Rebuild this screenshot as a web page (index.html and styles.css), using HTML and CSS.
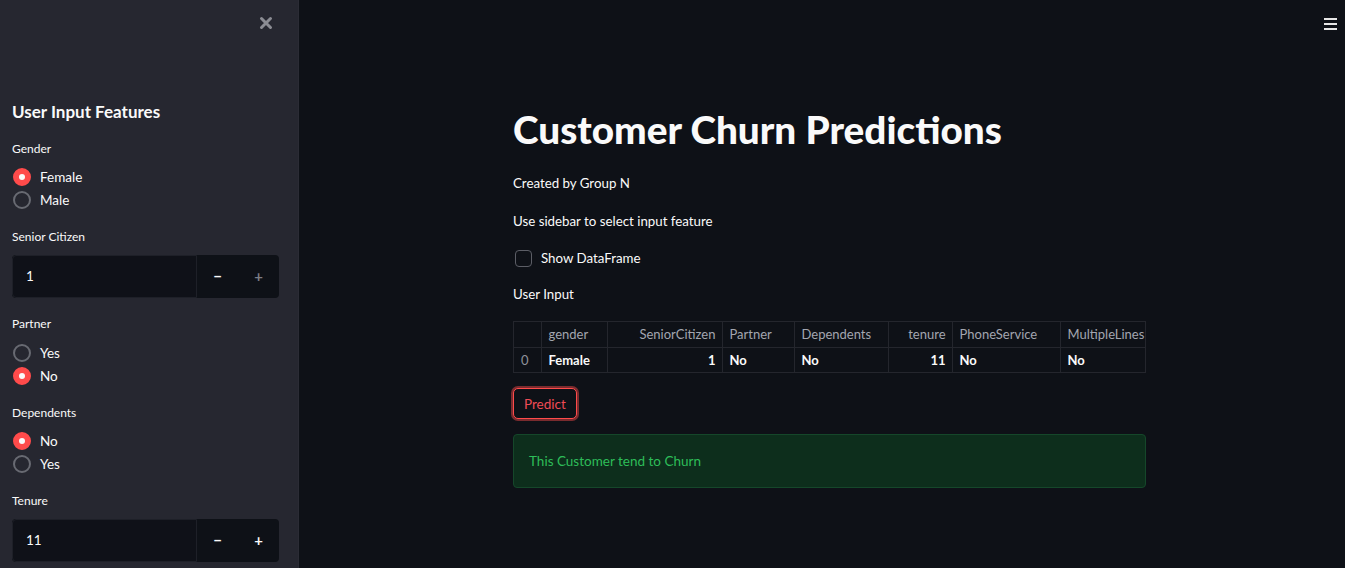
FILE: index.html
```html
<!DOCTYPE html>
<html lang="en">
<head>
<meta charset="utf-8">
<title>Customer Churn Predictions</title>
<link rel="stylesheet" href="styles.css">
</head>
<body>
<div class="app">
  <aside class="sidebar">
    <div class="sidebar-top">
      <button class="close-btn" aria-label="Close sidebar">
        <svg width="14" height="14" viewBox="0 0 14 14"><path d="M2.5 2.5 L11.5 11.5 M11.5 2.5 L2.5 11.5" stroke="#8b8c93" stroke-width="3" stroke-linecap="round"/></svg>
      </button>
    </div>
    <h2 class="side-title">User Input Features</h2>

    <div class="widget first">
      <div class="wlabel">Gender</div>
      <div class="radio-group">
        <div class="radio checked"><span class="dot"></span><span>Female</span></div>
        <div class="radio"><span class="dot"></span><span>Male</span></div>
      </div>
    </div>

    <div class="widget">
      <div class="wlabel">Senior Citizen</div>
      <div class="number-input">
        <div class="num-field">1</div>
        <div class="num-btns">
          <span class="step">&minus;</span>
          <span class="step disabled">+</span>
        </div>
      </div>
    </div>

    <div class="widget after-input">
      <div class="wlabel">Partner</div>
      <div class="radio-group">
        <div class="radio"><span class="dot"></span><span>Yes</span></div>
        <div class="radio checked"><span class="dot"></span><span>No</span></div>
      </div>
    </div>

    <div class="widget">
      <div class="wlabel">Dependents</div>
      <div class="radio-group">
        <div class="radio checked"><span class="dot"></span><span>No</span></div>
        <div class="radio"><span class="dot"></span><span>Yes</span></div>
      </div>
    </div>

    <div class="widget">
      <div class="wlabel">Tenure</div>
      <div class="number-input tight">
        <div class="num-field">11</div>
        <div class="num-btns">
          <span class="step">&minus;</span>
          <span class="step">+</span>
        </div>
      </div>
    </div>
  </aside>

  <main class="main">
    <div class="menu">
      <span></span><span></span><span></span>
    </div>
    <div class="block">
      <h1 class="title">Customer Churn Predictions</h1>
      <p class="text t1">Created by Group N</p>
      <p class="text t2">Use sidebar to select input feature</p>
      <label class="checkbox"><span class="box"></span><span>Show DataFrame</span></label>
      <p class="text t3">User Input</p>
      <div class="table-wrap">
        <table class="df">
          <colgroup>
            <col class="c-idx">
            <col class="c-gender">
            <col class="c-senior">
            <col class="c-partner">
            <col class="c-dep">
            <col class="c-ten">
            <col class="c-phone">
            <col class="c-multi">
          </colgroup>
          <thead>
            <tr>
              <th></th>
              <th>gender</th>
              <th class="num">SeniorCitizen</th>
              <th>Partner</th>
              <th>Dependents</th>
              <th class="num">tenure</th>
              <th>PhoneService</th>
              <th>MultipleLines</th>
            </tr>
          </thead>
          <tbody>
            <tr>
              <td class="idx">0</td>
              <td>Female</td>
              <td class="num">1</td>
              <td>No</td>
              <td>No</td>
              <td class="num">11</td>
              <td>No</td>
              <td>No</td>
            </tr>
          </tbody>
        </table>
      </div>
      <button class="predict">Predict</button>
      <div class="success">This Customer tend to Churn</div>
    </div>
  </main>
</div>
</body>
</html>
```
FILE: styles.css
```css
* { box-sizing: border-box; }
html, body { margin: 0; padding: 0; }
body {
  background: #0e1117;
  color: #fafafa;
  font-family: "Lato", "Noto Sans", sans-serif;
  width: 1345px;
  height: 568px;
  overflow: hidden;
}
.app {
  display: flex;
  height: 568px;
}
.sidebar {
  width: 299px;
  flex: none;
  background: #262730;
  padding: 0 19px 0 12px;
  border-right: 1px solid #2b2c35;
}
.sidebar-top {
  height: 100px;
  display: flex;
  justify-content: flex-end;
  align-items: flex-start;
  padding-top: 16px;
}
.close-btn {
  background: none;
  border: none;
  padding: 0;
  width: 14px;
  height: 14px;
  margin-right: 6px;
  display: flex;
}
.side-title {
  margin: 0;
  font-size: 17px;
  font-weight: 700;
  line-height: 24px;
  height: 24px;
}
.widget { margin-top: 15.5px; }
.widget.first { margin-top: 14.5px; }
.widget.after-input { margin-top: 16.5px; }
.wlabel {
  font-size: 12px;
  line-height: 20px;
  height: 20px;
}
.radio-group {
  margin-top: 7px;
  display: flex;
  flex-direction: column;
}
.widget.first .radio-group { margin-top: 6.5px; }
.radio {
  display: flex;
  align-items: center;
  height: 23px;
  font-size: 13.5px;
  gap: 9px;
}
.dot {
  width: 18px;
  height: 18px;
  border-radius: 50%;
  border: 2px solid #686a72;
  margin-left: 1px;
  display: flex;
  align-items: center;
  justify-content: center;
}
.radio.checked .dot {
  background: #ff4b4b;
  border-color: #ff4b4b;
}
.radio.checked .dot::after {
  content: "";
  width: 6px;
  height: 6px;
  border-radius: 50%;
  background: #fafafa;
}
.number-input {
  margin-top: 8px;
  height: 43px;
  display: flex;
  background: #0e1117;
  border-radius: 4px;
  overflow: hidden;
}
.number-input.tight { margin-top: 7.5px; }
.num-field {
  width: 186px;
  border: 1px solid #1e2028;
  border-radius: 4px 0 0 4px;
  background: #0f1118;
  font-size: 13.5px;
  display: flex;
  align-items: center;
  padding-left: 13px;
}
.num-btns {
  flex: 1;
  display: flex;
  align-items: center;
}
.step {
  width: 41px;
  text-align: center;
  font-size: 15px;
  font-weight: 700;
  color: #fafafa;
}
.step.disabled { color: #7c7e86; }

.main {
  flex: 1;
  position: relative;
  padding-left: 214px;
}
.menu {
  position: absolute;
  right: 8px;
  top: 18px;
  width: 13px;
  display: flex;
  flex-direction: column;
  gap: 3px;
}
.menu span {
  height: 2px;
  background: #e6e6e6;
}
.block {
  width: 633px;
  padding-top: 106px;
  display: flex;
  flex-direction: column;
  align-items: flex-start;
}
.title {
  margin: 0;
  font-size: 38.7px;
  font-weight: 900;
  line-height: 46px;
  height: 46px;
}
.text {
  margin: 0;
  font-size: 13.3px;
  line-height: 21px;
  height: 21px;
}
.t1 { margin-top: 20.5px; }
.t2 { margin-top: 17px; }
.checkbox {
  margin-top: 16px;
  display: flex;
  align-items: center;
  gap: 9px;
  height: 21px;
  font-size: 13.3px;
}
.box {
  width: 17px;
  height: 17px;
  border: 1px solid #5c5e66;
  border-radius: 4px;
  margin-left: 2px;
}
.t3 { margin-top: 15px; }
.table-wrap {
  margin-top: 16.5px;
  width: 633px;
  overflow: hidden;
  border: 1px solid #24262d;
}
.df {
  border-collapse: collapse;
  table-layout: fixed;
  width: 646px;
  font-size: 13px;
  white-space: nowrap;
}
.df th, .df td {
  height: 25px;
  padding: 0 6px 0 7px;
  border-right: 1px solid #24262d;
  text-align: left;
  overflow: hidden;
}
.df th {
  font-weight: 400;
  color: #a3a6b0;
  border-bottom: 1px solid #24262d;
}
.df td {
  font-weight: 700;
  color: #fafafa;
}
.df .num { text-align: right; }
.df td.idx { color: #8e919a; font-weight: 400; }
.c-idx { width: 27px; }
.c-gender { width: 66px; }
.c-senior { width: 115px; }
.c-partner { width: 72px; }
.c-dep { width: 94px; }
.c-ten { width: 64px; }
.c-phone { width: 108px; }
.c-multi { width: 100px; }

.predict {
  margin-top: 15px;
  height: 31px;
  padding: 0 10px;
  background: #0e1117;
  color: #f04b55;
  border: 1px solid #ff4b4b;
  border-radius: 5px;
  box-shadow: 0 0 0 2px rgba(255, 75, 75, 0.45);
  font-family: inherit;
  font-size: 13.5px;
  margin-bottom: 1px;
}
.success {
  margin-top: 14px;
  width: 633px;
  height: 54px;
  background: #0d2e1c;
  border: 1px solid #15472a;
  border-radius: 4px;
  color: #2dbd59;
  font-size: 13.5px;
  display: flex;
  align-items: center;
  padding-left: 15px;
}
```
